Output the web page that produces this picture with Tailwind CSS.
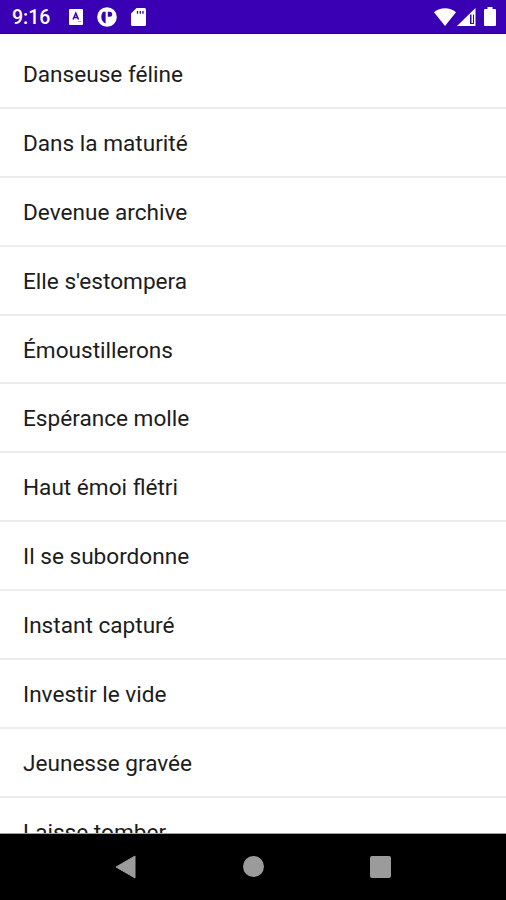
<!DOCTYPE html>
<html lang="fr">
<head>
    <meta charset="UTF-8">
    <meta name="viewport" content="width=device-width, initial-scale=1.0">
    <title>Poèmes</title>
    <script src="https://cdn.jsdelivr.net/npm/@tailwindcss/browser@4"></script>
</head>

<body class="bg-white h-screen overflow-hidden flex flex-col font-['Roboto',sans-serif]">
    <!-- Status bar -->
    <header class="h-[34px] shrink-0 bg-[#3a00b3] border-b border-[#2c0098] flex items-center justify-between pl-3 pr-[10px] text-white">
        <div class="flex items-center">
            <span class="w-[57px] text-[19.5px] leading-none font-medium pt-[3px]">9:16</span>
            <svg class="w-[14px] h-[16px] mt-px" viewBox="0 0 14 16">
                <rect width="14" height="16" rx="1" fill="#fff"/>
                <path d="M4 10.500 6.800 4.200l2.700 6.300M5 8.600h3.600" fill="none" stroke="#3a00b3" stroke-width="1.500"/>
                <path d="M9 12.500h3" stroke="#3a00b3" stroke-opacity=".4"/>
            </svg>
            <svg class="w-5 h-5 ml-[14px] mt-px" viewBox="0 0 20 20">
                <circle cx="10" cy="10" r="9.8" fill="#fff"/>
                <path d="M8.600 4.700v11.800C6 15.500 4.300 13 4.300 10c0-2 .7-3.800 1.700-5.300z" fill="#3a00b3"/>
                <path d="M10.800 4.700h1.800q2.600 0 2.600 2.500t-2.600 2.500h-1.800z" fill="#3a00b3"/>
            </svg>
            <svg class="w-[15px] h-[18px] ml-[14px]" viewBox="0 0 15 18">
                <path d="M5.500 0H13.500Q15 0 15 1.500V16.500Q15 18 13.500 18H1.500Q0 18 0 16.500V5.500z" fill="#fff"/>
                <path d="M6.500 3v2.700M9.300 3v2.700M12 3v2.700" stroke="#3a00b3" stroke-width="1.300"/>
            </svg>
        </div>
        <div class="flex items-center">
            <svg class="w-[22px] h-[18px] mt-px" viewBox="0 0 22 18">
                <path d="M11 18 0 4.300C6-1.200 16-1.200 22 4.300z" fill="#fff"/>
            </svg>
            <svg class="w-[19px] h-[18px] ml-[1px] mt-px" viewBox="0 0 19 18">
                <path d="M18.500 0V18H0z" fill="#fff"/>
                <path d="M13 6.500h1.500v9.500h-1.500zM14.500 15h2.500v1h-2.500zM16 6.500h1v9.500h-1z" fill="#3a00b3"/>
            </svg>
            <svg class="w-[12px] h-[19px] ml-[8px]" viewBox="0 0 12 19">
                <path d="M3.500 0h5v2H11q1 0 1 1V18q0 1-1 1H1q-1 0-1-1V3q0-1 1-1h2.500z" fill="#fff"/>
            </svg>
        </div>
    </header>

    <!-- List of titles, the last row runs under the navigation bar -->
    <main class="flex-1 min-h-0 overflow-hidden pt-[6px] border-b border-gray-400">
        <ul class="text-[22.600px] text-[#1c1c1c] font-normal">
            <li class="h-[68.900px] pl-[23px] pt-[3px] flex items-center border-b-2 border-[#ececec]">Danseuse féline</li>
            <li class="h-[68.900px] pl-[23px] pt-[3px] flex items-center border-b-2 border-[#ececec]">Dans la maturité</li>
            <li class="h-[68.900px] pl-[23px] pt-[3px] flex items-center border-b-2 border-[#ececec]">Devenue archive</li>
            <li class="h-[68.900px] pl-[23px] pt-[3px] flex items-center border-b-2 border-[#ececec]">Elle s'estompera</li>
            <li class="h-[68.900px] pl-[23px] pt-[3px] flex items-center border-b-2 border-[#ececec]">Émoustillerons</li>
            <li class="h-[68.900px] pl-[23px] pt-[3px] flex items-center border-b-2 border-[#ececec]">Espérance molle</li>
            <li class="h-[68.900px] pl-[23px] pt-[3px] flex items-center border-b-2 border-[#ececec]">Haut émoi flétri</li>
            <li class="h-[68.900px] pl-[23px] pt-[3px] flex items-center border-b-2 border-[#ececec]">Il se subordonne</li>
            <li class="h-[68.900px] pl-[23px] pt-[3px] flex items-center border-b-2 border-[#ececec]">Instant capturé</li>
            <li class="h-[68.900px] pl-[23px] pt-[3px] flex items-center border-b-2 border-[#ececec]">Investir le vide</li>
            <li class="h-[68.900px] pl-[23px] pt-[3px] flex items-center border-b-2 border-[#ececec]">Jeunesse gravée</li>
            <li class="h-[68.900px] pl-[23px] pt-[3px] flex items-center border-b-2 border-[#ececec]">Laisse tomber</li>
        </ul>
    </main>

    <!-- Navigation bar -->
    <nav class="h-[66px] shrink-0 bg-black flex items-center justify-between pl-[115px] pr-[115px] pb-px">
        <svg class="w-[21px] h-6" viewBox="0 0 21 24">
            <path d="M20 1v22L1 12z" fill="#9b9b9b" stroke="#9b9b9b" stroke-linejoin="round"/>
        </svg>
        <div class="size-[21px] rounded-full bg-[#9b9b9b]"></div>
        <div class="w-[21px] h-[22px] rounded-[2px] bg-[#9b9b9b]"></div>
    </nav>
</body>
</html>
